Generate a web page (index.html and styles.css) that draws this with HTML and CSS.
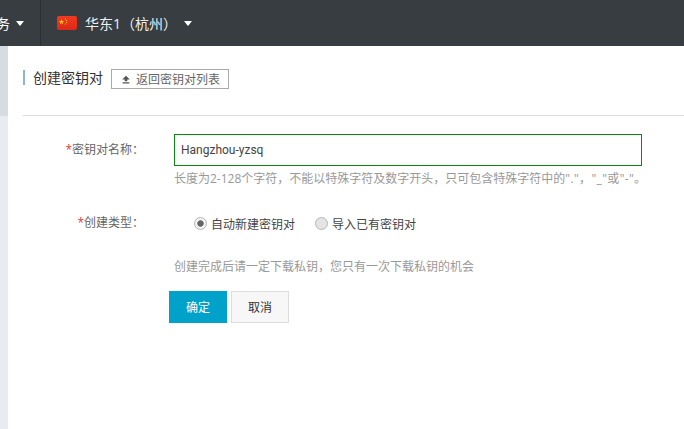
FILE: index.html
```html
<!DOCTYPE html>
<html lang="zh-CN">
<head>
<meta charset="utf-8">
<title>创建密钥对</title>
<link rel="stylesheet" href="styles.css">
</head>
<body>
<header class="topbar">
  <div class="nav-clip">
    <span class="nav-text">服务</span>
    <span class="caret"></span>
  </div>
  <div class="region">
    <svg class="flag" width="20" height="14" viewBox="0 0 20 14" aria-hidden="true">
      <defs><linearGradient id="flagfill" x1="0" y1="0" x2="0" y2="1"><stop offset="0" stop-color="#f23a1e"/><stop offset="1" stop-color="#d92a18"/></linearGradient></defs>
      <rect width="20" height="14" rx="2" fill="url(#flagfill)"/>
      <polygon points="4.5,3 5.2,5 7.2,5 5.6,6.3 6.2,8.3 4.5,7.1 2.8,8.3 3.4,6.3 1.8,5 3.8,5" fill="#f5c518"/>
      <circle cx="8.4" cy="2.8" r=".6" fill="#f5c518"/>
      <circle cx="9.6" cy="4.4" r=".6" fill="#f5c518"/>
      <circle cx="9.6" cy="6.4" r=".6" fill="#f5c518"/>
      <circle cx="8.4" cy="8" r=".6" fill="#f5c518"/>
    </svg>
    <span class="region-name">华东1（杭州）</span>
    <span class="caret caret-region"></span>
  </div>
</header>
<div class="body-row">
  <aside class="side"></aside>
  <main class="content">
    <div class="title-row">
      <h1 class="title">创建密钥对</h1>
      <button class="back-btn" type="button">
        <svg width="10" height="9" viewBox="0 0 10 9" aria-hidden="true"><path d="M5 .8 L8.8 4.6 H6.3 V6.2 H3.7 V4.6 H1.2 Z M1.6 7.2 H8.4 V8.4 H1.6 Z" fill="#555"/></svg>
        <span>返回密钥对列表</span>
      </button>
    </div>
    <form class="form">
      <label class="label label-name"><em>*</em>密钥对名称：</label>
      <div class="field">
        <input class="text-input" type="text" value="Hangzhou-yzsq">
        <p class="hint">长度为2-128个字符，不能以特殊字符及数字开头，只可包含特殊字符中的<span class="hint-tail">"."，"_"或"-"。</span></p>
      </div>
      <label class="label label-type"><em>*</em>创建类型：</label>
      <div class="field radios">
        <span class="radio-item"><span class="radio checked"></span>自动新建密钥对</span>
        <span class="radio-item"><span class="radio"></span>导入已有密钥对</span>
      </div>
      <div class="field-wide">
        <p class="hint">创建完成后请一定下载私钥，您只有一次下载私钥的机会</p>
        <div class="actions">
          <button class="btn btn-primary" type="button">确定</button>
          <button class="btn btn-default" type="button">取消</button>
        </div>
      </div>
    </form>
  </main>
</div>
</body>
</html>
```

FILE: styles.css
```css
* { box-sizing: border-box; }
html, body { margin: 0; padding: 0; height: 100%; overflow: hidden; background: #fff; }
body { font-family: "Open Sans", "Noto Sans CJK SC", sans-serif; font-size: 12px; color: #333; }

.topbar { height: 46px; background: #373d41; color: #fff; display: flex; align-items: center; }
.nav-clip { width: 41px; height: 46px; border-right: 1px solid #2a2f32; display: flex; align-items: center; justify-content: flex-end; padding-right: 16px; overflow: hidden; white-space: nowrap; flex: none; font-size: 14px; }
.nav-text { flex: none; margin-right: 1px; }
.caret { width: 0; height: 0; border-left: 4.5px solid transparent; border-right: 4.5px solid transparent; border-top: 5px solid #fff; flex: none; margin-left: 5px; }
.nav-clip .caret { margin-right: 0; }
.region { display: flex; align-items: center; padding-left: 16px; }
.flag { flex: none; margin-top: -1px; }
.region-name { margin-left: 8px; font-size: 14px; color: #f0f0f0; }
.caret-region { margin-left: 7px; }

.body-row { display: flex; height: 383px; }
.side { width: 8px; background: linear-gradient(#d5dde3 0 70px, #e8ebef 70px); flex: none; }
.content { flex: 1; padding: 23px 0 0 15px; min-width: 0; }

.title-row { display: flex; align-items: flex-start; height: 20px; margin-bottom: 26px; }
.title { margin: 1px 0 0; height: 15px; line-height: 15px; font-size: 14px; font-weight: normal; color: #333; border-left: 2px solid #8ab4d8; padding-left: 8px; }
.back-btn { margin-left: 8px; width: 118px; height: 20px; border: 1px solid #aaa; background: #fff; color: #666; font: inherit; display: flex; align-items: center; padding: 0 0 0 9px; gap: 5px; }

.form { border-top: 1px solid #ddd; display: grid; grid-template-columns: 121px 1fr; column-gap: 30px; padding-top: 18px; }
.label { text-align: right; color: #666; }
.label em { color: #e4393c; font-style: normal; }
.label-name { line-height: 32px; }
.label-type { line-height: 20px; margin-top: 25px; }
.field { min-width: 0; }
.text-input { display: block; width: 468px; height: 32px; border: 1px solid #0a8a0a; padding: 0 6px; font: 12px Roboto, sans-serif; color: #444; outline: none; background: #fff; }
.hint { margin: 4px 0 0; font-size: 12px; line-height: 18px; color: #999; white-space: nowrap; }
.hint-tail { letter-spacing: .35px; }
.radios { display: flex; margin-top: 26px; padding-left: 20px; height: 20px; align-items: center; color: #444; }
.radio-item { display: flex; align-items: center; margin-right: 20px; }
.radio { width: 13px; height: 13px; border-radius: 50%; border: 1px solid #b5b5b5; background: #e4e4e4; margin-right: 4px; flex: none; position: relative; top: -1px; }
.radio.checked { background: radial-gradient(circle, #666 0 2.8px, #f2f2f2 3.6px); }

.field-wide { grid-column: 2; margin-top: 24px; }
.field-wide .hint { margin-top: 0; }
.actions { display: flex; gap: 4px; margin: 15px 0 0 -5px; }
.btn { width: 58px; height: 32px; font: inherit; padding: 0; }
.btn-primary { background: #00a2ca; border: 1px solid #00a2ca; color: #fff; }
.btn-default { background: #f7f7f7; border: 1px solid #ddd; color: #333; }
```
